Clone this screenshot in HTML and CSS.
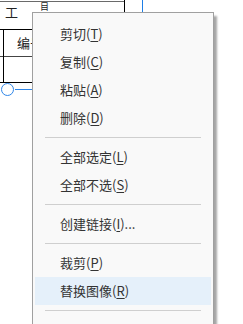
FILE: index.html
```html
<!DOCTYPE html>
<html lang="zh">
<head>
<meta charset="utf-8">
<link rel="stylesheet" href="styles.css">
</head>
<body>
<div class="doc">
  <div class="top-line"></div>
  <div class="vline-black"></div>
  <div class="vline-blue"></div>
  <span class="label label-gong">工</span>
  <span class="label label-mu">目</span>
  <div class="tbl-h tbl-h1"></div>
  <div class="tbl-h tbl-h2"></div>
  <div class="tbl-h tbl-h3"></div>
  <div class="tbl-v"></div>
  <span class="label label-bh">编号</span>
  <div class="handle"></div>
  <div class="handle-line"></div>
</div>
<div class="menu">
  <div class="item">剪切(<u>T</u>)</div>
  <div class="item">复制(<u>C</u>)</div>
  <div class="item">粘贴(<u>A</u>)</div>
  <div class="item">删除(<u>D</u>)</div>
  <div class="sep"></div>
  <div class="item">全部选定(<u>L</u>)</div>
  <div class="item">全部不选(<u>S</u>)</div>
  <div class="sep"></div>
  <div class="item">创建链接(<u>I</u>)...</div>
  <div class="sep"></div>
  <div class="item">裁剪(<u>P</u>)</div>
  <div class="item active">替换图像(<u>R</u>)</div>
  <div class="sep"></div>
</div>
</body>
</html>
```
FILE: styles.css
```css
html, body {
  margin: 0;
  padding: 0;
  background: #fff;
  width: 243px;
  height: 324px;
  overflow: hidden;
  font-family: "Noto Sans CJK SC", "Noto Sans", sans-serif;
}
.doc {
  position: relative;
  width: 243px;
  height: 324px;
}
.top-line {
  position: absolute;
  left: 0; top: 1px;
  width: 124px; height: 1px;
  background: #6a6a6a;
}
.vline-black {
  position: absolute;
  left: 124px; top: 0;
  width: 1px; height: 12px;
  background: #000;
}
.vline-blue {
  position: absolute;
  left: 142px; top: 0;
  width: 1px; height: 12px;
  background: #1e7ee6;
}
.label {
  position: absolute;
  font-size: 13px;
  line-height: 1;
  color: #222;
}
.label-gong { left: 5px; top: 5px; }
.label-mu { left: 40px; top: 2px; font-size: 9px; }
.label-bh { left: 17px; top: 36px; }
.tbl-h {
  position: absolute;
  left: 0;
  width: 33px; height: 1px;
  background: #000;
}
.tbl-h1 { top: 29px; }
.tbl-h2 { top: 56px; background: #444; }
.tbl-h3 { top: 82px; }
.tbl-v {
  position: absolute;
  left: 3px; top: 29px;
  width: 1px; height: 53px;
  background: #000;
}
.handle {
  position: absolute;
  left: 1px; top: 83px;
  width: 11px; height: 11px;
  border: 1.5px solid #2f86e8;
  border-radius: 50%;
  background: #fff;
}
.handle-line {
  position: absolute;
  left: 15px; top: 89px;
  width: 18px; height: 1px;
  background: #2f86e8;
}
.menu {
  position: absolute;
  left: 32px; top: 12px;
  width: 182px;
  height: 312px;
  box-sizing: border-box;
  background: #f9f9f9;
  border: 1px solid #a0a0a0;
  border-bottom: none;
  box-shadow: 3px 4px 2px rgba(0,0,0,0.35);
  padding: 7px 2px 0 2px;
  display: flex;
  flex-direction: column;
  overflow: hidden;
}
.item {
  flex: none;
  height: 28px;
  line-height: 28px;
  padding-left: 25px;
  font-size: 13px;
  color: #333;
  white-space: nowrap;
}
.item u {
  text-decoration-thickness: 1px;
  text-underline-offset: 2px;
}
.item.active {
  background: #e5f0fa;
}
.sep {
  flex: none;
  height: 1px;
  background: #cfcfcf;
  margin: 5px 10px 5px 10px;
}
```
